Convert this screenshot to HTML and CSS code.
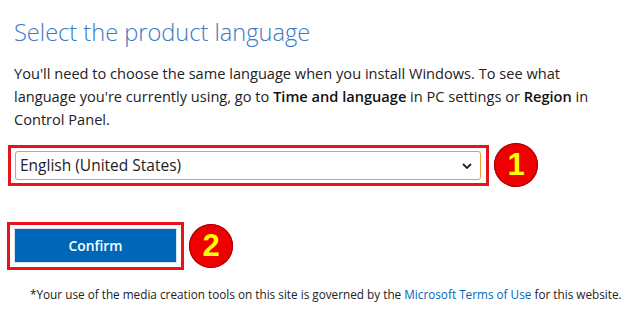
FILE: index.html
```html
<!DOCTYPE html>
<html lang="en">
  <head>
    <meta charset="UTF-8" />
    <meta name="viewport" content="width=device-width, initial-scale=1.0" />
    <title>Select the product language</title>
    <link rel="stylesheet" href="styles.css">
  </head>
  <body>
    <div class="page">
      <h2 class="title">Select the product language</h2>
      <p class="intro">
        You'll need to choose the same language when you install Windows. To see what
        language you're currently using, go to <b>Time and language</b> in PC settings or
        <b>Region</b> in Control Panel.
      </p>

      <div class="step step-select">
        <div class="mark mark-wide">
          <div class="select-wrap">
            <select class="lang-select">
              <option>English (United States)</option>
            </select>
            <svg class="chevron" width="10" height="6" viewBox="0 0 10 6">
              <path d="M1 1 L5 5 L9 1" fill="none" stroke="#222" stroke-width="1.8" />
            </svg>
          </div>
        </div>
        <span class="badge">1</span>
      </div>

      <div class="step step-confirm">
        <div class="mark">
          <button class="confirm-button">Confirm</button>
        </div>
        <span class="badge">2</span>
      </div>

      <p class="terms">
        *Your use of the media creation tools on this site is governed by the
        <a href="#">Microsoft Terms of Use</a> for this website.
      </p>
    </div>
  </body>
</html>
```

FILE: styles.css
```css
body {
  margin: 0;
  background: #fff;
  color: #222;
  font-family: "Open Sans", "Noto Sans", sans-serif;
}
.page {
  width: 640px;
  height: 317px;
  padding: 0 8px;
  box-sizing: border-box;
  overflow: hidden;
}
.title {
  margin: 16px 0 0 6px;
  font-size: 23.6px;
  font-weight: 300;
  line-height: 32px;
  color: #3b78c6;
}
.intro {
  margin: 14px 0 0 6px;
  width: 610px;
  font-size: 14.6px;
  line-height: 23px;
  color: #222;
}
.intro b {
  font-weight: 600;
  color: #111;
}
.step {
  display: flex;
  align-items: center;
}
.step-select {
  margin-top: 12px;
}
.step-confirm {
  margin-top: 35px;
  margin-left: -1px;
}
.mark {
  border: 3px solid #e8141c;
  padding: 3px 4px 4px 4px;
}
.mark-wide {
  padding: 3px 5px 3px 4px;
}
.select-wrap {
  position: relative;
  width: 466px;
  height: 29px;
}
.lang-select {
  appearance: none;
  -webkit-appearance: none;
  width: 100%;
  height: 100%;
  margin: 0;
  padding: 0 24px 0 4px;
  border: 1px solid #e3a13c;
  border-radius: 3px;
  background: #fff;
  color: #222;
  font-family: "Open Sans", "Noto Sans", sans-serif;
  font-size: 15.5px;
}
.chevron {
  position: absolute;
  right: 9px;
  top: 12px;
}
.confirm-button {
  display: block;
  width: 163px;
  height: 35px;
  border: 1px solid #d7e3ef;
  background: #0067b8;
  color: #fff;
  font-family: "Open Sans", "Noto Sans", sans-serif;
  font-size: 13.8px;
  font-weight: 600;
}
.badge {
  width: 44px;
  height: 44px;
  margin-left: 5px;
  border-radius: 50%;
  background: #ee0000;
  box-shadow: 0 0 0 1px #a30000 inset;
  color: #ffff00;
  font-family: "Liberation Sans", Arial, sans-serif;
  font-size: 31px;
  font-weight: 700;
  display: flex;
  align-items: center;
  justify-content: center;
}
.terms {
  margin: 16px 0 0 22px;
  font-size: 11.75px;
  white-space: nowrap;
  color: #222;
}
.terms a {
  color: #0067b8;
  text-decoration: none;
}
```
